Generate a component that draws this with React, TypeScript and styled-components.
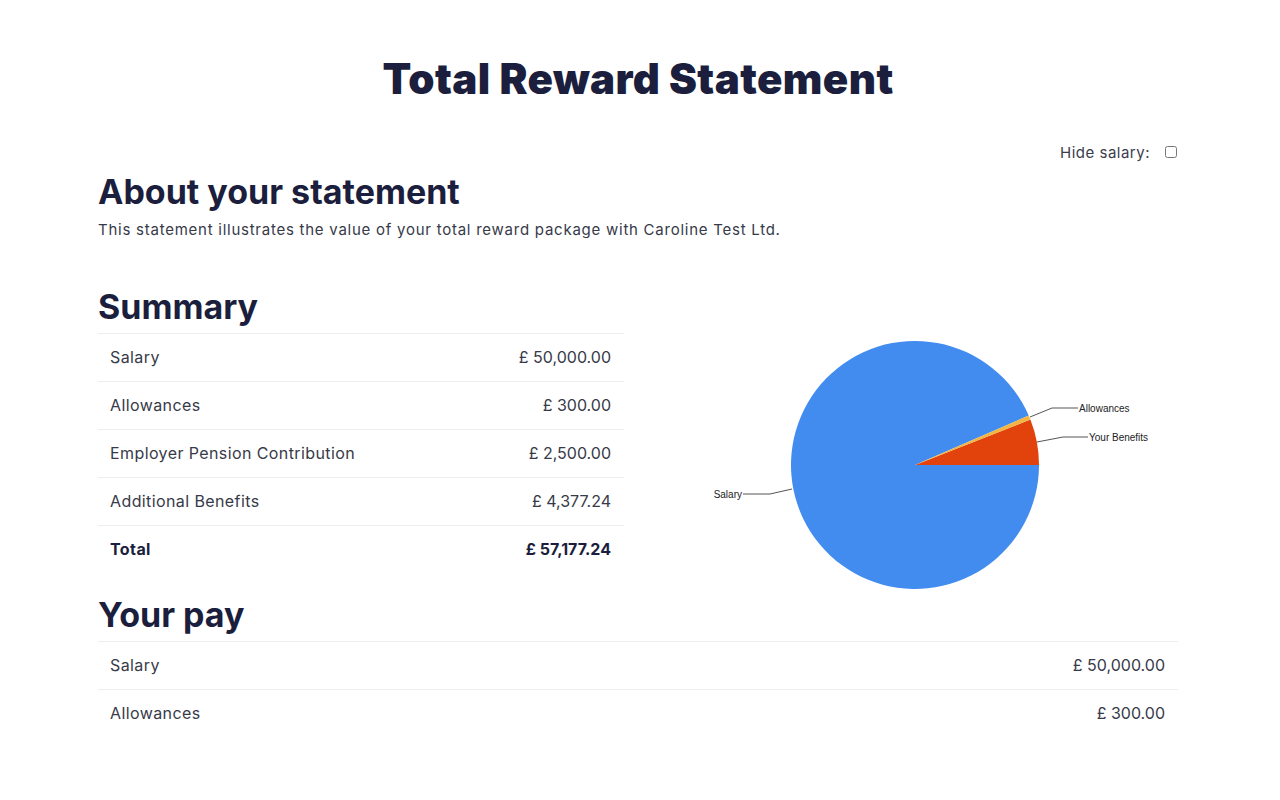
import React from 'react';
import styled, { createGlobalStyle } from 'styled-components';

const GlobalStyle = createGlobalStyle`
  body {
    margin: 0;
    background: #ffffff;
    font-family: Inter, 'Noto Sans', sans-serif;
    color: #373a48;
  }
`;

const Page = styled.div`
    width: 1080px;
    margin-left: 98px;
    padding-top: 55px;
    padding-bottom: 40px;
  `,
  Title = styled.h1`
    margin: 0;
    text-align: center;
    font-size: 42px;
    line-height: 48px;
    font-weight: 900;
    letter-spacing: 0.4px;
    color: #1b1e3c;
  `,
  Toolbar = styled.div`
    margin-top: 39px;
    display: flex;
    justify-content: flex-end;
    align-items: center;
    height: 20px;
    font-size: 15px;
    letter-spacing: 0.5px;
    color: #3a3d4c;
  `,
  HideBox = styled.input`
    margin: 0 1px 0 15px;
    width: 12px;
    height: 12px;
  `,
  SectionTitle = styled.h2<{ $gap: number }>`
    margin: ${(p) => p.$gap}px 0 0 0;
    font-size: 34px;
    line-height: 38px;
    font-weight: 700;
    color: #1b1e3c;
  `,
  Intro = styled.p`
    margin: 8px 0 0 0;
    font-size: 15px;
    line-height: 22px;
    letter-spacing: 0.75px;
  `,
  SummaryRow = styled.div`
    display: flex;
    flex-direction: row;
    margin-top: -1px;
  `,
  SummaryLeft = styled.div`
    width: 526px;
    flex-shrink: 0;
  `,
  ChartBox = styled.div`
    flex: 1;
    display: flex;
  `,
  ChartSvg = styled.svg`
    overflow: visible;
  `,
  ChartLabel = styled.text`
    font-family: 'Liberation Sans', Arial, sans-serif;
    font-size: 10px;
    fill: #222;
  `,
  Table = styled.div<{ $gap: number }>`
    margin-top: ${(p) => p.$gap}px;
    display: flex;
    flex-direction: column;
  `,
  Row = styled.div<{ $bold?: boolean }>`
    height: 47px;
    box-sizing: content-box;
    border-top: 1px solid #ebedf0;
    display: flex;
    justify-content: space-between;
    align-items: center;
    padding: 0 13px 0 12px;
    font-size: 16px;
    line-height: 45px;
    font-weight: ${(p) => (p.$bold ? 700 : 400)};
    color: ${(p) => (p.$bold ? '#1b1e3c' : '#373a48')};
  `,
  Label = styled.span`
    letter-spacing: 0.4px;
  `,
  Amount = styled.span`
    white-space: nowrap;
  `;

interface Line {
  label: string;
  amount: string;
  bold?: boolean;
}

const summary: Line[] = [
  { label: 'Salary', amount: '£ 50,000.00' },
  { label: 'Allowances', amount: '£ 300.00' },
  { label: 'Employer Pension Contribution', amount: '£ 2,500.00' },
  { label: 'Additional Benefits', amount: '£ 4,377.24' },
  { label: 'Total', amount: '£ 57,177.24', bold: true },
];

const pay: Line[] = [
  { label: 'Salary', amount: '£ 50,000.00' },
  { label: 'Allowances', amount: '£ 300.00' },
];

function LineRows({ lines }: { lines: Line[] }) {
  return (
    <>
      {lines.map((l) => (
        <Row key={l.label} $bold={l.bold}>
          <Label>{l.label}</Label>
          <Amount>{l.amount}</Amount>
        </Row>
      ))}
    </>
  );
}

/*
    pie drawn by hand, angles counterclockwise from 3 o'clock
*/
function PieChart() {
  const cx = 291,
    cy = 225,
    r = 124;
  const pt = (deg: number) => {
    const a = (deg * Math.PI) / 180;
    return `${(cx + r * Math.cos(a)).toFixed(2)},${(cy - r * Math.sin(a)).toFixed(2)}`;
  };
  const slice = (from: number, to: number) =>
    `M${cx},${cy} L${pt(from)} A${r},${r} 0 ${to - from > 180 ? 1 : 0} 0 ${pt(to)} Z`;
  return (
    <ChartSvg width="554" height="289">
      <path d={slice(23.5, 360)} fill="#428cf0" />
      <path d={slice(0, 21.5)} fill="#e2430c" />
      <path d={slice(21.5, 23.5)} fill="#f2b443" />
      <g stroke="#555" strokeWidth="1" fill="none">
        <polyline points="406,177 428,168 454,168" />
        <polyline points="413,202 439,197 464,197" />
        <polyline points="119,254 146,254 168,249" />
      </g>
      <ChartLabel x="455" y="171.5">
        Allowances
      </ChartLabel>
      <ChartLabel x="465" y="200.5">
        Your Benefits
      </ChartLabel>
      <ChartLabel x="118" y="257.5" textAnchor="end">
        Salary
      </ChartLabel>
    </ChartSvg>
  );
}

export default function App(): JSX.Element {
  return (
    <>
      <GlobalStyle />
      <Page>
        <Title>Total Reward Statement</Title>
        <Toolbar>
          <label htmlFor="hide-salary">Hide salary:</label>
          <HideBox type="checkbox" id="hide-salary" />
        </Toolbar>
        <SectionTitle $gap={11}>About your statement</SectionTitle>
        <Intro>
          This statement illustrates the value of your total reward package with
          Caroline Test Ltd.
        </Intro>
        <SummaryRow>
          <SummaryLeft>
            <SectionTitle $gap={48}>Summary</SectionTitle>
            <Table $gap={7}>
              <LineRows lines={summary} />
            </Table>
          </SummaryLeft>
          <ChartBox>
            <PieChart />
          </ChartBox>
        </SummaryRow>
        <SectionTitle $gap={23}>Your pay</SectionTitle>
        <Table $gap={7}>
          <LineRows lines={pay} />
        </Table>
      </Page>
    </>
  );
}
